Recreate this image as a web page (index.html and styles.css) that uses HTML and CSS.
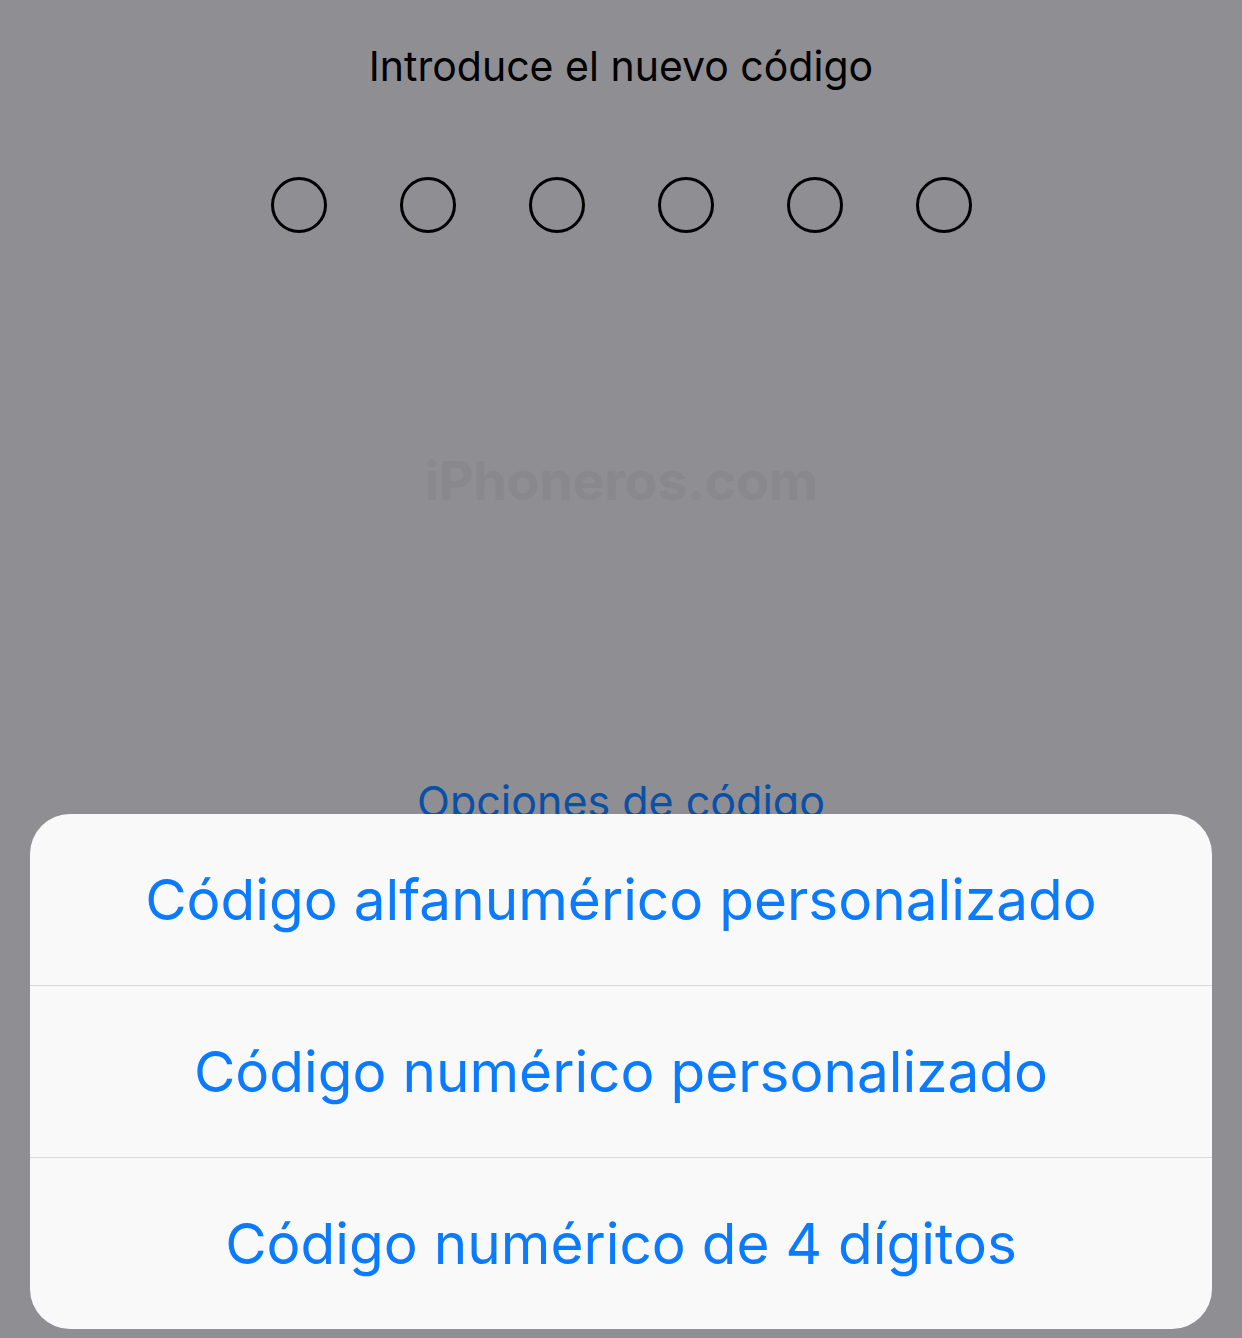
FILE: index.html
```html
<!DOCTYPE HTML>
<html>
<head>
<meta http-equiv="Content-Type" content="text/html; charset=utf-8">
<title>Código</title>
<link rel="stylesheet" href="styles.css">
</head>

<body>
	<div class="screen">
		<p class="title">Introduce el nuevo código</p>
		<div class="dots">
			<span></span>
			<span></span>
			<span></span>
			<span></span>
			<span></span>
			<span></span>
		</div>
		<p class="mark">iPhoneros.com</p>
		<a href="javascript:;" class="options">Opciones de código</a>

		<ul class="sheet">
			<li><a href="javascript:;">Código alfanumérico personalizado</a></li>
			<li><a href="javascript:;">Código numérico personalizado</a></li>
			<li><a href="javascript:;">Código numérico de 4 dígitos</a></li>
		</ul>
	</div>
</body>
</html>
```

FILE: styles.css
```css
body {margin: 0; background: #8f8e93; font-family: Inter, "Liberation Sans", sans-serif;}

.screen {height: 1338px; position: relative; overflow: hidden; display: flex; flex-direction: column; align-items: center;}

.title {margin: 44px 0 0; font-size: 41px; line-height: 44px; color: #000;}

.dots {display: flex; gap: 73px; margin-top: 89px;}
.dots span {width: 50px; height: 50px; border: 3px solid #000; border-radius: 50%;}

.mark {margin: 218px 0 0; font-size: 54px; line-height: 60px; font-weight: bold; color: #89888d; letter-spacing: -0.4px;}

.options {margin-top: 265px; font-size: 43px; line-height: 50px; color: #0a50a6; text-decoration: none;}

.sheet {position: absolute; left: 30px; right: 30px; bottom: 9px; margin: 0; padding: 0; list-style: none; background: #f9f9f9; border-radius: 40px; overflow: hidden;}
.sheet li {height: 171px; display: flex; align-items: center; justify-content: center; border-top: 1px solid #d8d8dc;}
.sheet li:first-child {border-top: 0;}
.sheet a {font-size: 56.7px; color: #0a7aff; text-decoration: none;}
```
